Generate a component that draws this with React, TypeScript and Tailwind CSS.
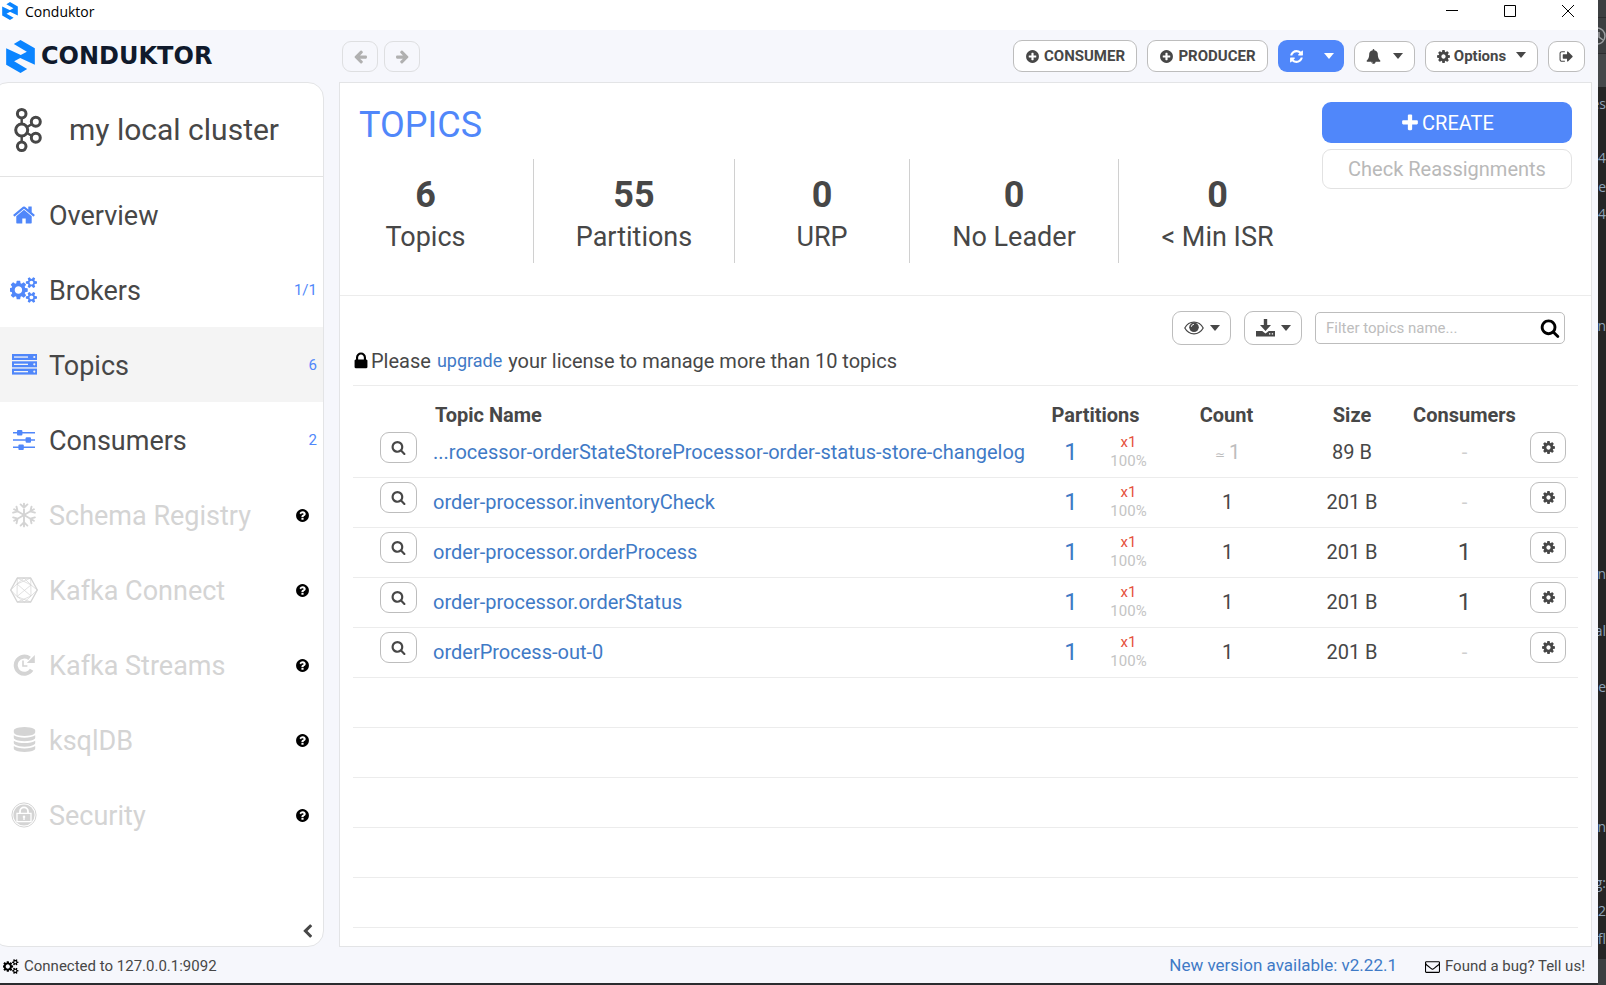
import React from "react";

/* ---------- icons ---------- */

const PATHS = {
  cog: "M1024 896q0-106-75-181t-181-75-181 75-75 181 75 181 181 75 181-75 75-181zm512-109v222q0 12-8 23t-20 13l-185 28q-19 54-39 91 35 50 107 138 10 12 10 25t-9 23q-27 37-99 108t-94 71q-12 0-26-9l-138-108q-44 23-91 38-16 136-29 186-7 28-36 28h-222q-14 0-24.5-8.5t-11.5-21.5l-28-184q-49-16-90-37l-141 107q-10 9-25 9-14 0-25-11-126-114-165-168-7-10-7-23 0-12 8-23 15-21 51-66.5t54-70.5q-27-50-41-99l-183-27q-13-2-21-12.5t-8-23.5v-222q0-12 8-23t19-13l186-28q14-46 39-92-40-57-107-138-10-12-10-24 0-10 9-23 26-36 98.5-107.5t94.5-71.5q13 0 26 10l138 107q44-23 91-38 16-136 29-186 7-28 36-28h222q14 0 24.5 8.5t11.5 21.5l28 184q49 16 90 37l142-107q9-9 24-9 13 0 25 10 129 119 165 170 7 8 7 22 0 12-8 23-15 21-51 66.5t-54 70.5q26 50 41 98l183 28q13 2 21 12.5t8 23.5z",
  cogs: "M832 896q0-106-75-181t-181-75-181 75-75 181 75 181 181 75 181-75 75-181zm768 512q0-52-38-90t-90-38-90 38-38 90q0 53 37.5 90.5t90.5 37.5 90.5-37.5 37.5-90.5zm0-1024q0-52-38-90t-90-38-90 38-38 90q0 53 37.5 90.5t90.5 37.5 90.5-37.5 37.5-90.5zm-384 421v185q0 10-7 19.5t-16 10.5l-155 24q-11 35-32 76 34 48 90 115 7 11 7 20 0 12-7 19-23 30-82.5 89.5t-78.5 59.5q-11 0-21-7l-115-90q-37 19-77 31-11 108-23 155-7 24-30 24h-186q-11 0-20-7.5t-10-17.5l-23-153q-34-10-75-31l-118 89q-7 7-20 7-11 0-21-8-144-133-144-160 0-9 7-19 10-14 41-53t47-61q-23-44-35-82l-152-24q-10-1-17-9.5t-7-19.5v-185q0-10 7-19.5t16-10.5l155-24q11-35 32-76-34-48-90-115-7-11-7-20 0-12 7-20 22-30 82-89t79-59q11 0 21 7l115 90q34-18 77-32 11-108 23-154 7-24 30-24h186q11 0 20 7.5t10 17.5l23 153q34 10 75 31l118-89q8-7 20-7 11 0 21 8 144 133 144 160 0 8-7 19-12 16-42 54t-45 60q23 48 34 82l152 23q10 2 17 10.5t7 19.5zm640 533v140q0 16-149 31-12 27-30 52 51 113 51 138 0 4-4 7-122 71-124 71-8 0-46-47t-52-68q-20 2-30 2t-30-2q-14 21-52 68t-46 47q-2 0-124-71-4-3-4-7 0-25 51-138-18-25-30-52-149-15-149-31v-140q0-16 149-31 13-29 30-52-51-113-51-138 0-4 4-7 4-2 35-20t59-34 30-16q8 0 46 46.5t52 67.5q20-2 30-2t30 2q51-71 92-112l6-2q4 0 124 70 4 3 4 7 0 25-51 138 17 23 30 52 149 15 149 31zm0-1024v140q0 16-149 31-12 27-30 52 51 113 51 138 0 4-4 7-122 71-124 71-8 0-46-47t-52-68q-20 2-30 2t-30-2q-14 21-52 68t-46 47q-2 0-124-71-4-3-4-7 0-25 51-138-18-25-30-52-149-15-149-31v-140q0-16 149-31 13-29 30-52-51-113-51-138 0-4 4-7 4-2 35-20t59-34 30-16q8 0 46 46.5t52 67.5q20-2 30-2t30 2q51-71 92-112l6-2q4 0 124 70 4 3 4 7 0 25-51 138 17 23 30 52 149 15 149 31z",
  refresh: "M1639 1056q0 5-1 7-64 268-268 434.5t-478 166.5q-146 0-282.5-55t-243.5-157l-129 129q-19 19-45 19t-45-19-19-45v-448q0-26 19-45t45-19h448q26 0 45 19t19 45-19 45l-137 137q71 66 161 102t187 36q134 0 250-65t186-179q11-17 53-117 8-23 30-23h192q13 0 22.5 9.5t9.5 22.5zm25-800v448q0 26-19 45t-45 19h-448q-26 0-45-19t-19-45 19-45l138-138q-148-137-349-137-134 0-250 65t-186 179q-11 17-53 117-8 23-30 23h-199q-13 0-22.5-9.5t-9.5-22.5v-7q65-268 270-434.5t480-166.5q146 0 284 55.5t245 156.5l130-129q19-19 45-19t45 19 19 45z",
  plusCircle: "M1344 960v-128q0-26-19-45t-45-19h-256v-256q0-26-19-45t-45-19h-128q-26 0-45 19t-19 45v256h-256q-26 0-45 19t-19 45v128q0 26 19 45t45 19h256v256q0 26 19 45t45 19h128q26 0 45-19t19-45v-256h256q26 0 45-19t19-45zm320-64q0 209-103 385.5t-279.5 279.5-385.5 103-385.5-103-279.5-279.5-103-385.5 103-385.5 279.5-279.5 385.5-103 385.5 103 279.5 279.5 103 385.5z",
  question: "M1024 1376v-192q0-14-9-23t-23-9h-192q-14 0-23 9t-9 23v192q0 14 9 23t23 9h192q14 0 23-9t9-23zm256-672q0-88-55.5-163t-138.5-116-170-41q-243 0-371 213-15 24 8 42l132 100q7 6 19 6 16 0 25-12 53-68 86-92 34-24 86-24 48 0 85.5 26t37.5 59q0 38-20 61t-68 45q-63 28-115.5 86.5t-52.5 125.5v36q0 14 9 23t23 9h192q14 0 23-9t9-23q0-19 21.5-49.5t54.5-49.5q32-18 49-28.5t46-35 44.5-48 28-60.5 12.5-81zm384 192q0 209-103 385.5t-279.5 279.5-385.5 103-385.5-103-279.5-279.5-103-385.5 103-385.5 279.5-279.5 385.5-103 385.5 103 279.5 279.5 103 385.5z",
  search: "M1216 832q0-185-131.5-316.5t-316.5-131.5-316.5 131.5-131.5 316.5 131.5 316.5 316.5 131.5 316.5-131.5 131.5-316.5zm512 832q0 52-38 90t-90 38q-54 0-90-38l-343-342q-179 124-399 124-143 0-273.5-55.5t-225-150-150-225-55.5-273.5 55.5-273.5 150-225 225-150 273.5-55.5 273.5 55.5 225 150 150 225 55.5 273.5q0 220-124 399l343 343q37 37 37 90z",
  signOut: "M704 1440q0 4 1 20t.5 26.5-3 23.5-10 19.5-20.5 6.5h-320q-119 0-203.5-84.5t-84.5-203.5v-704q0-119 84.5-203.5t203.5-84.5h320q13 0 22.5 9.5t9.5 22.5q0 4 1 20t.5 26.5-3 23.5-10 19.5-20.5 6.5h-320q-66 0-113 47t-47 113v704q0 66 47 113t113 47h312l11.5 1 11.5 3 8 5.5 7 9 2 13.5zm928-544q0 26-19 45l-544 544q-19 19-45 19t-45-19-19-45v-288h-448q-26 0-45-19t-19-45v-384q0-26 19-45t45-19h448v-288q0-26 19-45t45-19 45 19l544 544q19 19 19 45z",
  home: "M1472 992v480q0 26-19 45t-45 19h-384v-384h-256v384h-384q-26 0-45-19t-19-45v-480q0-1 .5-3t.5-3l575-474 575 474q1 2 1 6zm223-69l-62 74q-8 9-21 11h-3q-13 0-21-7l-692-577-692 577q-12 8-24 7-13-2-21-11l-62-74q-8-10-7-23.5t11-21.5l719-599q32-26 76-26t76 26l244 204v-195q0-14 9-23t23-9h192q14 0 23 9t9 23v408l219 182q10 8 11 21.5t-7 23.5z",
  bell: "M912 1696q0-16-16-16-59 0-101.5-42.5t-42.5-101.5q0-16-16-16t-16 16q0 73 51.5 124.5t124.5 51.5q16 0 16-16zm816-288q0 52-38 90t-90 38h-448q0 106-75 181t-181 75-181-75-75-181h-448q-52 0-90-38t-38-90q50-42 91-88t85-119.5 74.5-158.5 50-206 19.5-260q0-152 117-282.5t307-158.5q-8-19-8-39 0-40 28-68t68-28 68 28 28 68q0 20-8 39 190 28 307 158.5t117 282.5q0 139 19.5 260t50 206 74.5 158.5 85 119.5 91 88z",
  lock: "M640 768h512v-192q0-106-75-181t-181-75-181 75-75 181v192zm832 96v576q0 40-28 68t-68 28h-960q-40 0-68-28t-28-68v-576q0-40 28-68t68-28h32v-192q0-184 132-316t316-132 316 132 132 316v192h32q40 0 68 28t28 68z",
  plus: "M1600 736v192q0 40-28 68t-68 28h-416v416q0 40-28 68t-68 28h-192q-40 0-68-28t-28-68v-416h-416q-40 0-68-28t-28-68v-192q0-40 28-68t68-28h416v-416q0-40 28-68t68-28h192q40 0 68 28t28 68v416h416q40 0 68 28t28 68z",
  arrowLeft: "M1664 896v128q0 53-32.5 90.5t-84.5 37.5h-704l293 294q38 36 38 90t-38 90l-75 76q-37 37-90 37-52 0-91-37l-651-652q-37-37-37-90 0-52 37-91l651-650q38-38 91-38 52 0 90 38l75 74q38 38 38 91t-38 91l-293 293h704q52 0 84.5 37.5t32.5 90.5z",
  chevronLeft: "M1427 301l-531 531 531 531q19 19 19 45t-19 45l-166 166q-19 19-45 19t-45-19l-742-742q-19-19-19-45t19-45l742-742q19-19 45-19t45 19l166 166q19 19 19 45t-19 45z",
  envelope: "M1664 1504v-768q-32 36-69 66-268 206-426 338-51 43-83 67t-86.5 48.5-102.5 24.5h-2q-48 0-102.5-24.5t-86.5-48.5-83-67q-158-132-426-338-37-30-69-66v768q0 13 9.5 22.5t22.5 9.5h1472q13 0 22.5-9.5t9.5-22.5zm0-1051v-24.5l-.5-13-3-12.5-5.5-9-9-7.5-14-2.5h-1472q-13 0-22.5 9.5t-9.5 22.5q0 168 147 284 193 152 401 317 6 5 35 29.5t46 37.5 44.5 31.5 50.5 27.5 43 9h2q20 0 43-9t50.5-27.5 44.5-31.5 46-37.5 35-29.5q208-165 401-317 54-43 100.5-115.5t46.5-131.5zm128-37v1088q0 66-47 113t-113 47h-1472q-66 0-113-47t-47-113v-1088q0-66 47-113t113-47h1472q66 0 113 47t47 113z",
  database: "M896 768q237 0 443-43t325-127v170q0 69-103 128t-280 93.5-385 34.5-385-34.5-280-93.5-103-128v-170q119 84 325 127t443 43zm0 768q237 0 443-43t325-127v170q0 69-103 128t-280 93.5-385 34.5-385-34.5-280-93.5-103-128v-170q119 84 325 127t443 43zm0-384q237 0 443-43t325-127v170q0 69-103 128t-280 93.5-385 34.5-385-34.5-280-93.5-103-128v-170q119 84 325 127t443 43zm0-1152q208 0 385 34.5t280 93.5 103 128v128q0 69-103 128t-280 93.5-385 34.5-385-34.5-280-93.5-103-128v-128q0-69 103-128t280-93.5 385-34.5z",
};

const VIEW_BOXES: Partial<Record<keyof typeof PATHS, string>> = {
  cog: "0 0 1536 1792",
  cogs: "0 0 1920 1792",
};

function Icon({ name, className }: { name: keyof typeof PATHS; className: string }) {
  return (
    <svg aria-hidden="true" viewBox={VIEW_BOXES[name] ?? "0 0 1792 1792"} fill="currentColor" className={`shrink-0 ${className}`}>
      <path d={PATHS[name]} />
    </svg>
  );
}

function Caret() {
  return (
    <svg aria-hidden="true" viewBox="0 0 10 6" fill="currentColor" className="h-1.5 w-2.5 shrink-0">
      <path d="M0 0h10L5 6z" />
    </svg>
  );
}

function LogoMark({ className }: { className: string }) {
  return (
    <svg aria-hidden="true" viewBox="18 117 86 99" fill="#0a84ff" className={`shrink-0 ${className}`}>
      <path d="M104 191 52 167 80 152 41 129 61 117 104 142z" />
      <path d="M18 142 70 166 42 181 81 204 61 216 18 191z" />
    </svg>
  );
}

function KafkaMark() {
  return (
    <svg aria-hidden="true" viewBox="13 107 30 46" fill="none" stroke="#474747" strokeWidth="3" className="h-[46px] w-[30px] shrink-0">
      <circle cx="21.7" cy="113.7" r="4.3" />
      <circle cx="21.7" cy="130" r="6" />
      <circle cx="21.7" cy="146.3" r="4.3" />
      <circle cx="35.8" cy="121.7" r="4.5" />
      <circle cx="35.8" cy="137.8" r="4.5" />
      <path d="M21.7 118v6M21.7 136v6M27 127l5-3M27 133l5 3" strokeWidth="2.4" />
    </svg>
  );
}

function ServerIcon() {
  return (
    <svg aria-hidden="true" viewBox="0 0 25 21" className="h-[21px] w-[25px]">
      {[0, 7.3, 14.6].map((y) => (
        <g key={y}>
          <rect y={y} width="25" height="6" fill="currentColor" />
          <rect x="2" y={y + 2.4} width="14" height="1.3" fill="#f4f4f4" />
          <circle cx="22.3" cy={y + 3} r="1.1" fill="#f4f4f4" />
        </g>
      ))}
    </svg>
  );
}

function SlidersIcon() {
  return (
    <svg aria-hidden="true" viewBox="0 0 22 22" className="h-[22px] w-[22px]" fill="currentColor">
      <path d="M0 3h22v1.4H0zM0 10.3h22v1.4H0zM0 17.6h22V19H0z" />
      <rect x="4" y="1" width="5.4" height="5.4" rx="1" />
      <rect x="12.6" y="8.3" width="5.4" height="5.4" rx="1" />
      <rect x="5.4" y="15.6" width="5.4" height="5.4" rx="1" />
    </svg>
  );
}

function SnowflakeIcon() {
  return (
    <svg aria-hidden="true" viewBox="-13 -13 26 26" className="h-[26px] w-[26px]" fill="none" stroke="currentColor" strokeWidth="1.9" strokeLinecap="round">
      {[0, 60, 120, 180, 240, 300].map((a) => (
        <path key={a} transform={`rotate(${a})`} d="M0 0V-11.4M-3.4-10.6 0-7.4 3.4-10.6" />
      ))}
    </svg>
  );
}

function PolyhedronIcon() {
  return (
    <svg aria-hidden="true" viewBox="0 0 28 26" className="h-[26px] w-7" fill="none" stroke="currentColor" strokeLinejoin="round">
      <path d="M7.3 1h13.4L27.3 13 20.7 25H7.3L.7 13z" strokeWidth="1.4" />
      <path d="M7.3 1 7 19.5 20.7 25M20.7 1 21 19 7.3 25M7.3 1 21 8 27.3 13 21 19M20.7 1 7 7 .7 13 7 19.5M7 7l14 12M21 8 7 19.5M7 19.5l7.5 5.5M21 19l-6.5 6M7 7l7-6 7 7" strokeWidth=".7" />
    </svg>
  );
}

function StreamsIcon() {
  return (
    <svg aria-hidden="true" viewBox="0 0 22 22" className="h-[22px] w-[22px]" fill="none" stroke="currentColor">
      <path d="M18.6 15.8A8.6 8.6 0 1 1 16.6 4.4" strokeWidth="4" />
      <path d="M21.8 1v8h-8z" fill="currentColor" stroke="none" />
      <path d="M10 6.5V12h4.4" strokeWidth="1.6" />
    </svg>
  );
}

function SecurityIcon() {
  return (
    <svg aria-hidden="true" viewBox="0 0 26 26" className="h-[26px] w-[26px]">
      <circle cx="13" cy="13" r="12.1" fill="none" stroke="currentColor" strokeWidth="1" />
      <circle cx="13" cy="13" r="10.6" fill="currentColor" />
      <path d="M9 12V9.4a4 4 0 0 1 8 0V12" fill="none" stroke="#fff" strokeWidth="1.8" />
      <path d="M6 11.4h14v8.2H6z" fill="none" stroke="#fff" strokeWidth="1.3" />
      <path d="M13 13.6a1.3 1.3 0 0 1 .7 2.4v2h-1.4v-2a1.3 1.3 0 0 1 .7-2.4z" fill="#fff" />
    </svg>
  );
}

function EyeIcon() {
  return (
    <svg aria-hidden="true" viewBox="0 0 20 14" className="h-3.5 w-5 shrink-0">
      <path d="M.8 7C3 3 6.3 1.2 10 1.2S17 3 19.2 7C17 11 13.7 12.8 10 12.8S3 11 .8 7z" fill="none" stroke="currentColor" strokeWidth="1.2" />
      <circle cx="10" cy="6.300" r="4.800" fill="currentColor" />
      <path d="M7.3 5.8A2.8 2.8 0 0 1 10 3.3" fill="none" stroke="#fff" strokeWidth=".9" />
    </svg>
  );
}

function DownloadIcon() {
  return (
    <svg aria-hidden="true" viewBox="0 0 19 18" className="h-[18px] w-[19px] shrink-0" fill="currentColor">
      <path d="M7.8 0h3.4v6H15l-5.5 6L4 6h3.8z" />
      <path d="M0 12h6.2l3.3 2.5L12.8 12H19v5.5H0z" />
      <path d="M13 14.3h1.3v1.3H13zM15.8 14.3h1.3v1.3h-1.3z" fill="#fff" />
    </svg>
  );
}

/* ---------- controls ---------- */

function OutlineButton({ label, className, children }: { label?: string; className: string; children: React.ReactNode }) {
  return (
    <button
      type="button"
      aria-label={label}
      className={`flex shrink-0 items-center justify-center rounded-[9px] border border-[#bdbdbd] bg-white text-[15px] font-bold text-[#474747] ${className}`}
    >
      {children}
    </button>
  );
}

function TitleBar() {
  return (
    <header className="flex h-[30px] shrink-0 items-center bg-white text-black">
      <LogoMark className="ml-0.5 mb-2 h-[18px] w-4" />
      <span className="mb-1.5 ml-[7px] font-['Open_Sans',sans-serif] text-sm">Conduktor</span>
      <div className="mb-2 ml-auto mr-6 flex items-center gap-[46px]">
        <button type="button" aria-label="Minimize" className="flex h-3 w-3">
          <svg viewBox="0 0 12 12" className="h-3 w-3" stroke="currentColor"><path d="M0 5.5h12" /></svg>
        </button>
        <button type="button" aria-label="Maximize" className="flex h-3 w-3">
          <svg viewBox="0 0 12 12" className="h-3 w-3" fill="none" stroke="currentColor"><path d="M.5.5h11v11H.5z" /></svg>
        </button>
        <button type="button" aria-label="Close" className="flex h-3 w-3">
          <svg viewBox="0 0 12 12" className="h-3 w-3" stroke="currentColor"><path d="m0 0 12 12M12 0 0 12" /></svg>
        </button>
      </div>
    </header>
  );
}

function Toolbar() {
  return (
    <div className="flex h-[52px] shrink-0 items-center pr-[13px]">
      <div className="flex w-[342px] items-center pl-1.5">
        <LogoMark className="h-[33px] w-[29px]" />
        <span className="ml-1.5 font-['DejaVu_Sans',sans-serif] text-2xl font-bold leading-8 text-[#101a2c]">CONDUKTOR</span>
      </div>
      <div className="flex gap-1.5 text-[#b0b0b0]">
        <button type="button" aria-label="Back" className="flex h-[31px] w-9 items-center justify-center rounded-[9px] border border-[#dedfe1]">
          <Icon name="arrowLeft" className="h-[15px] w-[15px]" />
        </button>
        <button type="button" aria-label="Forward" className="flex h-[31px] w-9 items-center justify-center rounded-[9px] border border-[#dedfe1]">
          <Icon name="arrowLeft" className="h-[15px] w-[15px] -scale-x-100" />
        </button>
      </div>
      <div className="ml-auto flex items-center gap-2.5">
        <OutlineButton className="h-8 w-[124px] gap-1">
          <Icon name="plusCircle" className="h-[15px] w-[15px]" />
          CONSUMER
        </OutlineButton>
        <OutlineButton className="h-8 w-[121px] gap-1">
          <Icon name="plusCircle" className="h-[15px] w-[15px]" />
          PRODUCER
        </OutlineButton>
        <button type="button" aria-label="Refresh" className="flex h-8 w-[66px] items-center justify-center gap-5 rounded-[9px] bg-[#5087fa] text-white">
          <Icon name="refresh" className="h-[15px] w-[15px]" />
          <Caret />
        </button>
        <OutlineButton label="Notifications" className="h-[31px] w-[61px] gap-3">
          <Icon name="bell" className="h-[15px] w-[15px]" />
          <Caret />
        </OutlineButton>
        <OutlineButton className="h-[31px] w-[113px]">
          <Icon name="cog" className="mr-1 h-[15px] w-[13px]" />
          Options
          <span className="ml-2.5 pb-0.5">
            <Caret />
          </span>
        </OutlineButton>
        <OutlineButton label="Sign out" className="h-[31px] w-[37px]">
          <Icon name="signOut" className="h-[15px] w-[15px]" />
        </OutlineButton>
      </div>
    </div>
  );
}

/* ---------- sidebar ---------- */

type NavItem = { label: string; icon: React.ReactNode; badge?: string; state?: "active" | "disabled" };

const NAV: NavItem[] = [
  { label: "Overview", icon: <Icon name="home" className="h-6 w-6" /> },
  { label: "Brokers", icon: <Icon name="cogs" className="h-[26px] w-7" />, badge: "1/1" },
  { label: "Topics", icon: <ServerIcon />, badge: "6", state: "active" },
  { label: "Consumers", icon: <SlidersIcon />, badge: "2" },
  { label: "Schema Registry", icon: <SnowflakeIcon />, state: "disabled" },
  { label: "Kafka Connect", icon: <PolyhedronIcon />, state: "disabled" },
  { label: "Kafka Streams", icon: <StreamsIcon />, state: "disabled" },
  { label: "ksqlDB", icon: <Icon name="database" className="h-[25px] w-[25px]" />, state: "disabled" },
  { label: "Security", icon: <SecurityIcon />, state: "disabled" },
];

function Sidebar() {
  return (
    <aside className="-ml-2 flex w-[332px] shrink-0 flex-col overflow-hidden rounded-2xl border border-[#e3e4e6] bg-white">
      <div className="flex h-[94px] shrink-0 items-center border-b border-[#e3e3e3] pl-5">
        <KafkaMark />
        <h2 className="ml-[26px] text-[30px] leading-10">my local cluster</h2>
      </div>
      <nav>
        {NAV.map(({ label, icon, badge, state }) => (
          <a
            key={label}
            href="#"
            className={`flex h-[75px] items-center pl-3.5 ${state === "active" ? "bg-[#f4f4f4]" : ""} ${state === "disabled" ? "pr-[13px] text-[#d4d4d4]" : "pr-1.5"}`}
          >
            <span className={`flex w-[34px] justify-center ${state === "disabled" ? "" : "text-[#5087fa]"}`}>{icon}</span>
            <span className="ml-2 pt-0.5 text-[27px] leading-9">{label}</span>
            <span className="ml-auto flex pt-0.5 text-[15px] text-[#5087fa]">
              {badge}
              {state === "disabled" && <Icon name="question" className="h-[15px] w-[15px] text-black" />}
            </span>
          </a>
        ))}
      </nav>
      <button type="button" aria-label="Collapse sidebar" className="mb-[7px] ml-auto mr-2 mt-auto">
        <Icon name="chevronLeft" className="h-[15px] w-[15px]" />
      </button>
    </aside>
  );
}

/* ---------- topics page ---------- */

const STATS = [
  { value: "6", label: "Topics", box: "w-[149px] pr-[67px]" },
  { value: "55", label: "Partitions", box: "w-[201px]" },
  { value: "0", label: "URP", box: "w-[175px]" },
  { value: "0", label: "No Leader", box: "w-[209px]" },
  { value: "0", label: "< Min ISR", box: "w-[197px] border-r-0" },
];

type Topic = { name: string; count: string; approx?: boolean; size: string; consumers: number };

const TOPICS: Topic[] = [
  { name: "...rocessor-orderStateStoreProcessor-order-status-store-changelog", count: "1", approx: true, size: "89 B", consumers: 0 },
  { name: "order-processor.inventoryCheck", count: "1", size: "201 B", consumers: 0 },
  { name: "order-processor.orderProcess", count: "1", size: "201 B", consumers: 1 },
  { name: "order-processor.orderStatus", count: "1", size: "201 B", consumers: 1 },
  { name: "orderProcess-out-0", count: "1", size: "201 B", consumers: 0 },
];

const EMPTY_ROWS = [0, 1, 2, 3, 4];

function Summary() {
  return (
    <section className="flex h-[213px] shrink-0 justify-between border-b border-[#ececec] pl-[19px] pr-[19px] pt-[19px]">
      <div>
        <h1 className="text-4xl leading-[46px] text-[#5087fa]">TOPICS</h1>
        <dl className="ml-[26px] mt-[11px] flex h-[104px]">
          {STATS.map(({ value, label, box }) => (
            <div key={label} className={`flex flex-col-reverse justify-center whitespace-nowrap border-r border-[#d0d0d0] pt-2 text-center ${box}`}>
              <dt className="text-[27px] leading-10">{label}</dt>
              <dd className="text-4xl font-bold leading-[44px]">{value}</dd>
            </div>
          ))}
        </dl>
      </div>
      <div className="flex w-[250px] flex-col gap-1.5 text-xl">
        <button type="button" className="flex h-[41px] items-center justify-center gap-0.5 rounded-[9px] bg-[#5087fa] text-white">
          <Icon name="plus" className="h-5 w-5" />
          CREATE
        </button>
        <button type="button" disabled className="h-10 rounded-[9px] border border-[#e2e2e2] text-[#b9b9b9]">
          Check Reassignments
        </button>
      </div>
    </section>
  );
}

function Filters() {
  return (
    <div className="flex shrink-0 items-center justify-end gap-[13px] pr-[26px] pt-[15px]">
      <OutlineButton label="Visible columns" className="h-[34px] w-[59px] gap-1.5">
        <EyeIcon />
        <Caret />
      </OutlineButton>
      <OutlineButton label="Export" className="h-[34px] w-[58px] gap-1.5">
        <DownloadIcon />
        <Caret />
      </OutlineButton>
      <label className="flex h-8 w-[250px] items-center rounded-[5px] border border-[#bdbdbd] pl-2.5 pr-1">
        <input aria-label="Filter topics" placeholder="Filter topics name..." className="min-w-0 flex-1 text-[15px] outline-none placeholder:text-[#bdbdbd]" />
        <Icon name="search" className="h-5 w-5 text-black" />
      </label>
    </div>
  );
}

function TopicTable() {
  return (
    <table className="mx-[13px] table-fixed border-separate border-spacing-0 border-t border-[#ececec] text-xl">
      <colgroup>
        <col className="w-[80px]" />
        <col />
        <col className="w-[60px]" />
        <col className="w-[55px]" />
        <col className="w-[143px]" />
        <col className="w-[106px]" />
        <col className="w-[119px]" />
        <col className="w-[54px]" />
      </colgroup>
      <thead>
        <tr className="h-[42px] [&>th]:p-0 [&>th]:pt-4 [&>th]:leading-6">
          <th aria-label="Inspect" />
          <th className="text-left">
            <span className="pl-0.5">Topic Name</span>
          </th>
          <th colSpan={2}>
            <span className="pr-1.5">Partitions</span>
          </th>
          <th>
            <span className="pr-0.5">Count</span>
          </th>
          <th>Size</th>
          <th>Consumers</th>
          <th aria-label="Settings" />
        </tr>
      </thead>
      <tbody className="[&_td]:h-[50px] [&_td]:border-b [&_td]:border-[#ececec] [&_td]:p-0 [&_td]:pb-0.5">
        {TOPICS.map((t) => (
          <tr key={t.name} className="text-center">
            <td className="align-top">
              <OutlineButton label={`Inspect ${t.name}`} className="ml-[27px] mt-1 h-[31px] w-[37px]">
                <Icon name="search" className="h-[15px] w-[15px]" />
              </OutlineButton>
            </td>
            <td className="whitespace-nowrap text-left">
              <a href="#" className="text-[#3f7ac6]">
                {t.name}
              </a>
            </td>
            <td className="text-2xl text-[#3f7ac6]">1</td>
            <td className="text-[15px] leading-[19px]">
              <div className="text-[#e5513d]">x1</div>
              <div className="text-[#c4c4c4]">100%</div>
            </td>
            <td className={t.approx ? "text-[#bdbdbd]" : ""}>
              {t.approx && <span className="mr-1 text-xs">≃</span>}
              {t.count}
            </td>
            <td>{t.size}</td>
            <td className={t.consumers ? "text-2xl" : "text-[#cfcfcf]"}>{t.consumers || "-"}</td>
            <td className="align-top">
              <OutlineButton label={`Settings for ${t.name}`} className="ml-1.5 mt-1 h-[31px] w-9">
                <Icon name="cog" className="h-[15px] w-[13px]" />
              </OutlineButton>
            </td>
          </tr>
        ))}
        {EMPTY_ROWS.map((n) => (
          <tr key={n} aria-hidden="true">
            <td colSpan={8} />
          </tr>
        ))}
      </tbody>
    </table>
  );
}

function StatusBar() {
  return (
    <footer className="flex h-9 shrink-0 items-center pl-[3px] pr-[13px] pt-0.5 text-[15px]">
      <Icon name="cogs" className="h-[15px] w-4 text-black" />
      <span className="ml-[5px]">Connected to 127.0.0.1:9092</span>
      <a href="#" className="ml-auto text-[17px] text-[#3f7ac6]">
        New version available: v2.22.1
      </a>
      <a href="#" className="ml-7 flex items-center gap-[5px]">
        <Icon name="envelope" className="h-[15px] w-[15px] text-black" />
        Found a bug? Tell us!
      </a>
    </footer>
  );
}

/* ---------- editor window behind ---------- */

const FRAGMENTS = [
  { text: "es", box: "top-[92px]" },
  { text: "64", box: "top-[146px]" },
  { text: "ce", box: "top-[175px]" },
  { text: "64", box: "top-[202px]" },
  { text: "n", box: "top-[314px]" },
  { text: "in", box: "top-[562px]" },
  { text: "al", box: "top-[619px]" },
  { text: "e", box: "top-[675px]" },
  { text: "n", box: "top-[815px]" },
  { text: "g:", box: "top-[871px]" },
  { text: "2", box: "top-[899px]" },
  { text: "fl", box: "top-[927px]" },
];

function BackgroundWindow() {
  return (
    <div aria-hidden="true" className="relative flex w-2 shrink-0 flex-col overflow-hidden bg-[#252525] font-['Open_Sans',sans-serif] text-sm leading-6 text-[#8fa3b8]">
      <div className="h-[18px] border-b border-[#2c2d2f] bg-[#3c3f41]" />
      <div className="h-9 border-b border-[#2c2d2f] bg-[#3c3f41]" />
      <div className="h-[33px] bg-[#45484a]" />
      <div className="mt-auto h-[26px] bg-[#3c3f41]" />
      <svg viewBox="0 0 18 18" className="absolute right-0 top-[27px] h-[18px] w-[18px]" fill="none" stroke="#9a9da0" strokeWidth="1.5">
        <circle cx="9" cy="9" r="8" />
        <path d="M11 5v5l4 3" />
      </svg>
      {FRAGMENTS.map(({ text, box }) => (
        <span key={box} className={`absolute right-0 ${box}`}>
          {text}
        </span>
      ))}
    </div>
  );
}

export default function App() {
  return (
    <div className="flex h-screen overflow-hidden bg-[#2b2c2f] font-[Roboto,sans-serif] text-[#474747]">
      <div className="mb-0.5 flex min-w-0 flex-1 flex-col bg-[#f6f7fc]">
        <TitleBar />
        <Toolbar />
        <div className="flex min-h-0 flex-1 gap-[15px] pr-1.5">
          <Sidebar />
          <main className="flex min-w-0 flex-1 flex-col overflow-hidden border border-[#e3e4e6] bg-white">
            <Summary />
            <Filters />
            <p className="flex shrink-0 items-center pb-2.5 pl-[11px] pt-0.5 text-xl">
              <Icon name="lock" className="h-5 w-5 text-black" />
              <span>Please</span>
              <a href="#" className="mx-1.5 text-lg text-[#3f7ac6]">
                upgrade
              </a>
              your license to manage more than 10 topics
            </p>
            <TopicTable />
          </main>
        </div>
        <StatusBar />
      </div>
      <BackgroundWindow />
    </div>
  );
}
